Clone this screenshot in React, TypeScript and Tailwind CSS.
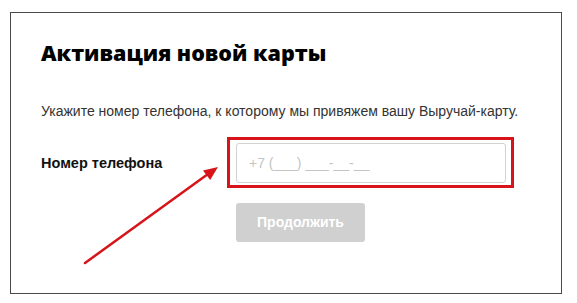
import React from 'react';

const sans = { fontFamily: '"Liberation Sans", Arial, sans-serif' };

function Arrow() {
  return (
    <svg
      className="absolute left-0 top-0 pointer-events-none"
      width={577}
      height={303}
      viewBox="0 0 577 303"
    >
      <line x1={85} y1={263} x2={208} y2={174} stroke="#d7141a" strokeWidth={2.5} strokeLinecap="round" />
      <polygon points="218,167 210.2,180 203,170.5" fill="#d7141a" />
    </svg>
  );
}

export default function App() {
  return (
    <div className="relative w-[577px] h-[303px] bg-white overflow-hidden" style={sans}>
      <div className="ml-[10px] mt-[12px] w-[552px] h-[282px] border border-[#4a4a4a] pl-[30px] pt-[25px]">
        <h1
          className="text-[21.5px] leading-[30px] font-extrabold text-black"
          style={{ fontFamily: '"Open Sans", Lato, sans-serif' }}
        >
          Активация новой карты
        </h1>
        <p className="mt-[33px] text-[14px] leading-[20px] text-[#333]">
          Укажите номер телефона, к которому мы привяжем вашу Выручай-карту.
        </p>
        <div className="mt-[22px] flex items-center">
          <div className="w-[195px] text-[14.5px] leading-[20px] font-bold text-[#111]">Номер телефона</div>
          <div className="relative">
            <div className="w-[270px] h-[40px] rounded-[3px] border border-[#d2d2d2] bg-white pl-[12px] flex items-center text-[14px] text-[#c4c4c4]">
              +7 (___) ___-__-__
            </div>
            <div className="absolute left-[-9px] top-[-6px] w-[287px] h-[51px] border-[3px] border-[#d7141a]" />
          </div>
        </div>
        <button className="mt-[20px] ml-[195px] w-[129px] h-[39px] rounded-[3px] bg-[#d0d0d0] text-white text-[14px] font-bold">
          Продолжить
        </button>
      </div>
      <Arrow />
    </div>
  );
}
